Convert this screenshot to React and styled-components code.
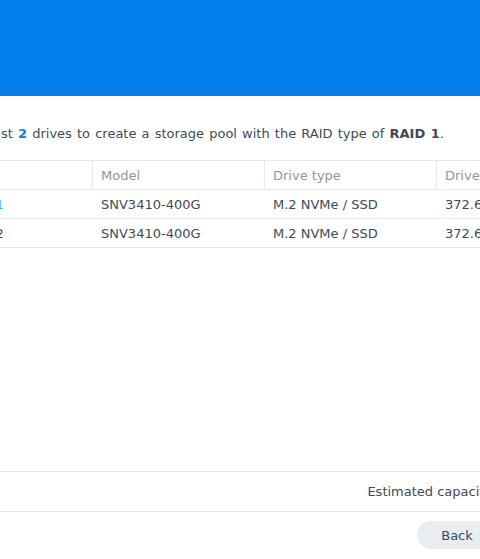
import React from "react";
import styled, { createGlobalStyle } from "styled-components";

const GlobalStyle = createGlobalStyle`
  html, body {
    margin: 0;
    padding: 0;
    background: #ffffff;
    overflow: hidden;
  }
  * {
    box-sizing: border-box;
  }
`;

const Page = styled.div`
  width: 480px;
  height: 559px;
  overflow: hidden;
  display: flex;
  flex-direction: column;
  font-family: "DejaVu Sans", Verdana, sans-serif;
  font-size: 13px;
  color: #414b55;
`;

const TitleBar = styled.div`
  height: 96px;
  flex: none;
  background: #057fec;
`;

const Dialog = styled.div`
  width: 700px;
  margin-left: -80px;
  flex: 1;
  display: flex;
  flex-direction: column;
`;

const Body = styled.div`
  height: 375px;
  padding-top: 29px;
`;

const Desc = styled.p`
  margin: 0 0 0 -2px;
  line-height: 18px;
  word-spacing: 1px;
  white-space: nowrap;
`;

const Count = styled.b`
  color: #057fec;
`;

const Table = styled.div`
  margin-top: 17px;
  border-top: 1px solid #e4e9ee;
`;

const Row = styled.div`
  display: grid;
  grid-template-columns: 172px 172px 172px 1fr;
  height: 29px;
  border-bottom: 1px solid #e4e9ee;
`;

const HeadCell = styled.div`
  display: flex;
  align-items: center;
  padding-left: 8px;
  color: #8e979f;
  white-space: nowrap;
  border-left: ${({ $first }) => ($first ? "none" : "1px solid #e4e9ee")};
`;

const Cell = styled.div`
  display: flex;
  align-items: center;
  padding-left: 9px;
  white-space: nowrap;
  color: ${({ $link }) => ($link ? "#49aef0" : "#414b55")};
`;

const Footer = styled.div`
  border-top: 1px solid #e4e9ee;
`;

const Summary = styled.div`
  height: 40px;
  display: flex;
  align-items: center;
  justify-content: flex-end;
  padding-right: 60px;
  border-bottom: 1px solid #e4e9ee;
  white-space: nowrap;
`;

const Actions = styled.div`
  display: flex;
  justify-content: flex-end;
  gap: 10px;
  padding: 9px 33px 0 0;
`;

const Button = styled.button`
  height: 28px;
  min-width: 80px;
  padding: 0 24px;
  border: none;
  border-radius: 14px;
  font-family: inherit;
  font-size: 13px;
  color: ${({ $primary }) => ($primary ? "#ffffff" : "#414b55")};
  background: ${({ $primary }) => ($primary ? "#057fec" : "#e8edf2")};
`;

const drives = [
  { name: "M.2 Drive 1", model: "SNV3410-400G", type: "M.2 NVMe / SSD", size: "372.6 GB", link: true },
  { name: "M.2 Drive 2", model: "SNV3410-400G", type: "M.2 NVMe / SSD", size: "372.6 GB" },
];

const App = () => (
  <>
    <GlobalStyle />
    <Page>
      <TitleBar />
      <Dialog>
        <Body>
          <Desc>
            Select at least <Count>2</Count> drives to create a storage pool with the RAID type of{" "}
            <b>RAID 1</b>.
          </Desc>
          <Table>
            <Row>
              <HeadCell $first>Drive</HeadCell>
              <HeadCell>Model</HeadCell>
              <HeadCell>Drive type</HeadCell>
              <HeadCell>Drive size</HeadCell>
            </Row>
            {drives.map((d) => (
              <Row key={d.name}>
                <Cell $link={d.link}>{d.name}</Cell>
                <Cell>{d.model}</Cell>
                <Cell>{d.type}</Cell>
                <Cell>{d.size}</Cell>
              </Row>
            ))}
          </Table>
        </Body>
        <Footer>
          <Summary>Estimated capacity: 372.6 GB</Summary>
          <Actions>
            <Button>Back</Button>
            <Button $primary>Next</Button>
          </Actions>
        </Footer>
      </Dialog>
    </Page>
  </>
);

export default App;
